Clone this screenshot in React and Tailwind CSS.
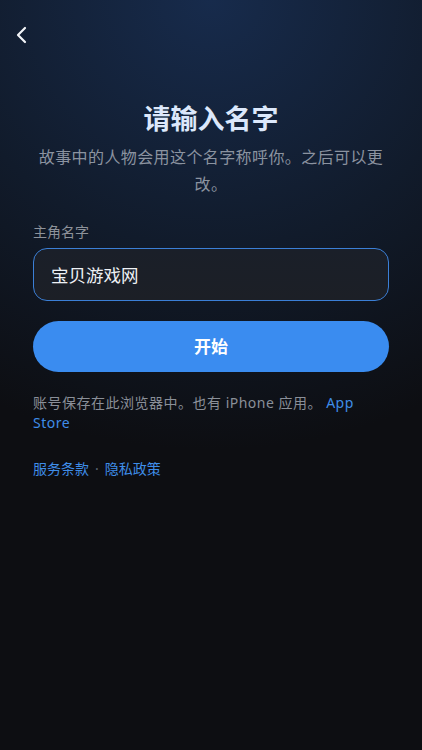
import { useState } from "react";

function BackIcon() {
  return (
    <svg width="14" height="18" viewBox="0 0 14 18" fill="none">
      <path d="M10 2L3 9l7 7" stroke="#f2f4f8" strokeWidth="2.2" strokeLinecap="round" strokeLinejoin="round" />
    </svg>
  );
}

export default function App() {
  const [name, setName] = useState("宝贝游戏网");

  return (
    <main
      className="min-h-screen w-full h-[750px] flex flex-col bg-[radial-gradient(115%_60%_at_50%_0%,#172b4c_0%,#111b2b_55%,#0d0e12_100%)] bg-[#0d0e12]"
      style={{ fontFamily: '"Noto Sans", "Noto Sans CJK SC", sans-serif' }}
    >
      <div className="h-[70px] pl-[15px] pt-[26px]">
        <button className="p-0">
          <BackIcon />
        </button>
      </div>

      <section className="px-[33px] flex flex-col">
        <h1 className="mt-[31px] text-center text-[27px] leading-[36px] font-bold text-[#dce8fb]">请输入名字</h1>
        <p className="mt-[7px] text-center text-[16px] leading-[27px] tracking-[0.4px] text-[#8b93a0]">
          故事中的人物会用这个名字称呼你。之后可以更改。
        </p>

        <label className="mt-[24px] text-[14px] leading-[20px] text-[#8d929a]">主角名字</label>
        <input
          value={name}
          onChange={(e) => setName(e.target.value)}
          className="mt-[6px] h-[53px] w-full rounded-[14px] border border-[#3b7fd6] bg-[linear-gradient(180deg,#1a1f29,#1c1f26)] px-[17px] text-[17.5px] text-[#eef1f5] outline-none"
        />

        <button className="mt-[20px] h-[51px] w-full rounded-full bg-[#3a8cf0] text-[17px] font-bold text-white">
          开始
        </button>

        <p className="mt-[21px] text-[14px] leading-[20px] tracking-[0.5px] text-[#8a8f98]">
          账号保存在此浏览器中。也有 iPhone 应用。 <a className="text-[#3f8de8]">App Store</a>
        </p>

        <div className="mt-[26px] text-[14px] leading-[20px] text-[#3f8de8]">
          <a>服务条款</a>
          <span className="mx-[6px] text-[#5c6675]">·</span>
          <a>隐私政策</a>
        </div>
      </section>
    </main>
  );
}
